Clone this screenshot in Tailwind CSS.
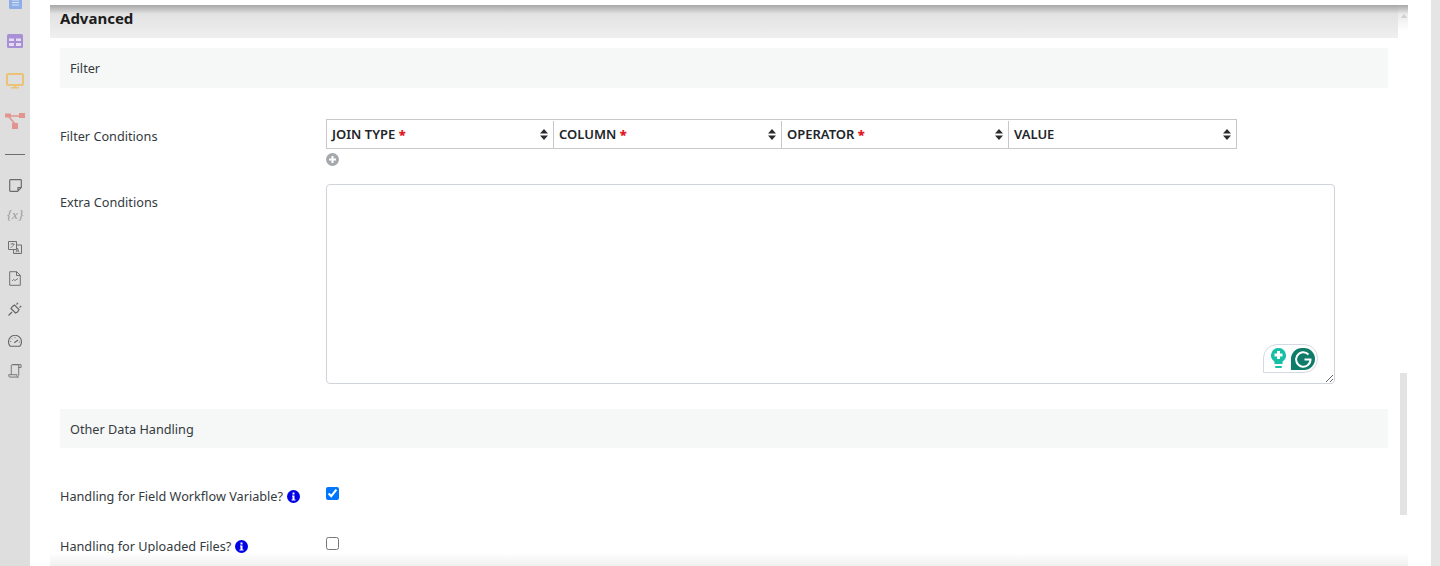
<!DOCTYPE html>
<html lang="en">
<head>
  <meta charset="UTF-8" />
  <title>Advanced</title>
  <script src="https://cdn.jsdelivr.net/npm/@tailwindcss/browser@4"></script>
</head>
<body class="bg-white font-['Noto_Sans',sans-serif] text-[12.7px] text-[#343a40] overflow-hidden">
  <div class="relative flex h-[566px] w-[1440px] overflow-hidden">
    <!-- Sidebar -->
    <aside class="flex h-full w-[30px] shrink-0 flex-col items-center bg-[#dedede]">
      <svg class="-mt-[8px] h-[17px] w-[13px] shrink-0" viewBox="0 0 13 17"><rect width="13" height="17" rx="1" fill="#8eaee8"/><path d="M3 8h7M3 10.500h7M3 13h7" stroke="#dbe5f6" stroke-width="1"/></svg>
      <svg class="mt-[25px] h-[14px] w-[16px] shrink-0" viewBox="0 0 16 14"><rect width="16" height="14" rx="1.500" fill="#a88fd6"/><path d="M2 4.500h5V7H2zM9 4.500h5V7H9zM2 9h5v3H2zM9 9h5v3H9z" fill="#e4def2"/></svg>
      <svg class="mt-[25px] h-[16px] w-[18px] shrink-0" viewBox="0 0 18 16"><rect x="1" y="1" width="16" height="11" rx="1" fill="none" stroke="#eac377" stroke-width="2"/><path d="M8 12h2v2h3v1.500H5V14h3z" fill="#eac377"/></svg>
      <svg class="mt-[24px] h-[16px] w-[20px] shrink-0" viewBox="0 0 20 16"><path d="M3 3h14M4 4l7 8" stroke="#e2958e" stroke-width="1.500"/><rect y="0.500" width="6" height="4" fill="#e2958e"/><rect x="14" y="0" width="6" height="5" fill="#e2958e"/><rect x="7" y="10" width="6" height="6" fill="#e2958e"/></svg>
      <div class="mt-[25px] h-px w-[20px] shrink-0 bg-[#6f6f6f]"></div>
      <svg class="mt-[24px] h-[13px] w-[13px] shrink-0" viewBox="0 0 13 13"><path d="M1.500.7h10a.8.8 0 0 1 .8.8v7L8.500 12.300h-7a.8.8 0 0 1-.8-.8V1.500a.8.8 0 0 1 .8-.8zM12 8.500H9v3.500" fill="none" stroke="#6b6b6b" stroke-width="1.200"/></svg>
      <span class="mt-[16px] h-[14px] shrink-0 font-['Liberation_Serif',serif] text-[13px] leading-[14px] italic text-[#9a9a9a]">{x}</span>
      <svg class="mt-[19px] h-[13px] w-[14px] shrink-0" viewBox="0 0 14 13" fill="none" stroke="#707070"><path d="M.5.500h8v8H.5zM5.500 8.500v4h8V4H8.500"/><path d="M2.500 3h4M4.500 2v1M6 3c-.5 2-2 3-3.500 3.500" stroke-width=".8"/><path d="M8 11.500l1.500-4.500 1.500 4.500M8.500 10h2" stroke-width=".8"/></svg>
      <svg class="mt-[17px] h-[15px] w-[12px] shrink-0" viewBox="0 0 12 15" fill="none" stroke="#707070"><path d="M.7.700h7l3.600 3.600v10H.7zM7.500.7v3.800h3.800"/><path d="M3 10l1.500-1.500L6 9.500l3-2" stroke-width=".9"/></svg>
      <svg class="mt-[16px] h-[14px] w-[14px] shrink-0" viewBox="0 0 14 14" fill="none" stroke="#666" stroke-width="1.200"><path d="M.5 13.500l3.500-3.500M3 6.500l4.500 4.500 2-1 1.500-2.500L6.500 3 4.500 4.500zM8.500 2.500L10 .8M11.500 5.500L13.200 4"/></svg>
      <svg class="mt-[19px] h-[12px] w-[14px] shrink-0" viewBox="0 0 14 12" fill="none" stroke="#666" stroke-width="1.100"><path d="M2.300 11.300a6.500 6.500 0 1 1 9.400 0zM6.300 7.800L10 5"/><path d="M2 6.500h1.200M10.800 7h1.200M7 2v1.200M3.800 3.500l.8.800" stroke-width=".8"/></svg>
      <svg class="mt-[17px] h-[14px] w-[14px] shrink-0" viewBox="0 0 15 15" fill="none" stroke="#707070"><path d="M3.500 11.500V1.500A1 1 0 0 1 4.500.7h9.500v3h-3M4.500.7h7v11.800M.7 11.500h9v1a1.500 1.500 0 0 0 1.500 1.500H2a1.500 1.500 0 0 1-1.300-1.500z"/></svg>
    </aside>

    <!-- Dialog -->
    <main class="relative ml-[20px] mt-[5px] w-[1358px] shrink-0">
      <div class="h-[33px] w-[1348px] bg-gradient-to-b from-[#dedede] to-[#efefef] pl-[10px] text-[15px] leading-[27px] font-bold text-[#1c1c1c]">Advanced</div>
      <div class="w-[1348px] px-[10px] pt-[10px]">
        <div class="h-[40px] bg-[#f6f7f7] pl-[10px] leading-[41px]">Filter</div>

        <div class="mt-[31px] flex">
          <label class="w-[266px] shrink-0 pt-[7px] leading-[20px]">Filter Conditions</label>
          <div>
            <div class="flex h-[30px] w-[911px] border border-[#c8c8c8] pt-px text-[13px] font-semibold text-[#212529]">
              <div class="flex w-[227px] items-center justify-between border-r border-[#c8c8c8] pr-[5px] pl-[5px]"><span>JOIN TYPE <b class="text-[#e01b24]">*</b></span><svg class="h-[11px] w-[8px]" viewBox="0 0 8 11" fill="#2b2b2b"><path d="M4 0l4 4.500H0zM4 11L0 6.500h8z"/></svg></div>
              <div class="flex w-[228px] items-center justify-between border-r border-[#c8c8c8] pr-[5px] pl-[5px]"><span>COLUMN <b class="text-[#e01b24]">*</b></span><svg class="h-[11px] w-[8px]" viewBox="0 0 8 11" fill="#2b2b2b"><path d="M4 0l4 4.500H0zM4 11L0 6.500h8z"/></svg></div>
              <div class="flex w-[227px] items-center justify-between border-r border-[#c8c8c8] pr-[5px] pl-[5px]"><span>OPERATOR <b class="text-[#e01b24]">*</b></span><svg class="h-[11px] w-[8px]" viewBox="0 0 8 11" fill="#2b2b2b"><path d="M4 0l4 4.500H0zM4 11L0 6.500h8z"/></svg></div>
              <div class="flex flex-1 items-center justify-between pr-[5px] pl-[5px]"><span>VALUE</span><svg class="h-[11px] w-[8px]" viewBox="0 0 8 11" fill="#2b2b2b"><path d="M4 0l4 4.500H0zM4 11L0 6.500h8z"/></svg></div>
            </div>
            <svg class="mt-[4px] h-[13px] w-[13px]" viewBox="0 0 13 13"><circle cx="6.500" cy="6.500" r="6.500" fill="#a5a8ad"/><path d="M6.500 3v7M3 6.500h7" stroke="#fff" stroke-width="2"/></svg>
          </div>
        </div>

        <div class="mt-[18px] flex">
          <label class="w-[266px] shrink-0 pt-[8px] leading-[20px]">Extra Conditions</label>
          <div class="relative h-[200px] w-[1009px] rounded-[4px] border border-[#ced4da]">
            <textarea class="block h-full w-full resize rounded-[4px] outline-none"></textarea>
            <!-- Grammarly widget -->
            <div class="absolute top-[159px] left-[936px] flex h-[29px] w-[55px] items-center gap-[5px] rounded-[14px] rounded-bl-none border border-[#d5d9e3] bg-white pl-[7px]">
              <svg class="h-[21px] w-[15px]" viewBox="0 0 15 21"><path d="M7.500 0a7.500 7.500 0 0 1 4 13.800V16h-8v-2.200A7.500 7.500 0 0 1 7.500 0z" fill="#15bfa5"/><path d="M6 3h3v2.500h2.500v3H9V11H6V8.500H3.500v-3H6z" fill="#fff"/><rect x="4" y="18" width="7" height="2" rx="1" fill="#15bfa5"/></svg>
              <svg class="h-[22px] w-[24px]" viewBox="0 0 24 22"><path d="M11 0h2a11 11 0 0 1 0 22H0V11A11 11 0 0 1 11 0z" fill="#0d7c68"/><path d="M17.500 6.500A7.200 7.200 0 1 0 19.500 11.500h-6" fill="none" stroke="#fff" stroke-width="2"/></svg>
            </div>
          </div>
        </div>

        <div class="mt-[25px] h-[39px] bg-[#f6f7f7] pl-[10px] leading-[41px]">Other Data Handling</div>

        <div class="mt-[39px] flex h-[20px]">
          <label class="-mt-px flex h-[20px] w-[266px] shrink-0 items-center gap-[4px] leading-[20px]">Handling for Field Workflow Variable?
            <svg class="h-[13px] w-[13px]" viewBox="0 0 13 13"><circle cx="6.500" cy="6.500" r="6.500" fill="#0000e6"/><path d="M5.500 2.500h2v2h-2zM5 5.500h2.500v4H8.500V10.500h-4V9.500h1V6.500H5z" fill="#fff"/></svg>
          </label>
          <input type="checkbox" checked class="h-[13px] w-[13px] accent-[#0075ff]" />
        </div>

        <div class="mt-[30px] flex h-[20px]">
          <label class="-mt-px flex h-[20px] w-[266px] shrink-0 items-center gap-[4px] leading-[20px]">Handling for Uploaded Files?
            <svg class="h-[13px] w-[13px]" viewBox="0 0 13 13"><circle cx="6.500" cy="6.500" r="6.500" fill="#0000e6"/><path d="M5.500 2.500h2v2h-2zM5 5.500h2.500v4H8.500V10.500h-4V9.500h1V6.500H5z" fill="#fff"/></svg>
          </label>
          <input type="checkbox" class="h-[13px] w-[13px] accent-[#0075ff]" />
        </div>
      </div>

      <!-- Scroll shadows and scrollbar -->
      <div class="pointer-events-none absolute top-0 left-[1348px] h-[26px] w-[10px] bg-gradient-to-b from-[#e0e0e0] to-white"></div>
      <div class="pointer-events-none absolute top-0 left-0 h-[9px] w-[1358px] bg-gradient-to-b from-black/25 to-transparent"></div>
      <div class="absolute top-[9px] left-[1351px] h-0 w-0 border-x-[3px] border-b-[4px] border-x-transparent border-b-[#cfcfcf]"></div>
      <div class="absolute top-[368px] left-[1350px] h-[142px] w-[7px] bg-[#e3e3e3]"></div>
    </main>

    <div class="pointer-events-none absolute bottom-0 left-[50px] h-[13px] w-[1358px] bg-gradient-to-t from-[#f0f0f0] to-white"></div>
    <div class="absolute top-0 right-0 h-full w-[9px] bg-[#e5e5e5]"></div>
  </div>
</body>
</html>
